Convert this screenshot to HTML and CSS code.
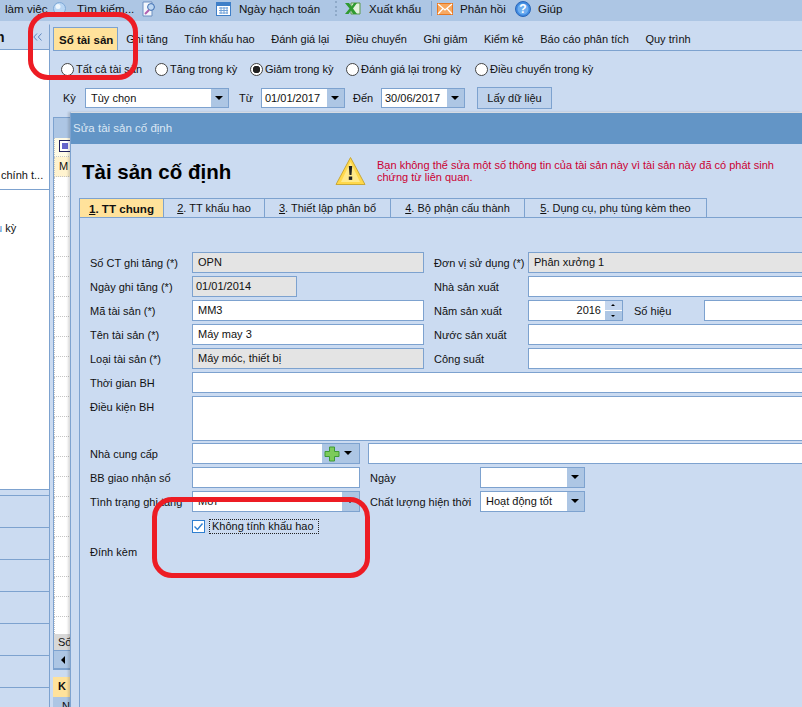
FILE: index.html
```html
<!DOCTYPE html>
<html lang="vi">
<head>
  <meta charset="UTF-8">
  <title>Sửa tài sản cố định</title>
  <link rel="stylesheet" href="styles.css">
</head>
<body>

  <div class="toolbar">
    <span class="tool tool-first">làm việc</span>
    <svg class="tool-icon ic-search" width="13" height="13" viewBox="0 0 13 13"><circle cx="6.500" cy="6.500" r="6" fill="#b9d6f4" stroke="#7fa9d6"/><circle cx="5" cy="4.500" r="2.500" fill="#eef6fd"/></svg>
    <span class="tool t-search">Tìm kiếm...</span>
    <svg class="tool-icon ic-report" width="15" height="16" viewBox="0 0 15 16"><path d="M1 1h9v14H1z" fill="#f4f7fc" stroke="#6d8fc0"/><circle cx="9" cy="6" r="3.400" fill="#bcd6f2" stroke="#3c6cb0"/><path d="M7 9l-4 4" stroke="#b060b0" stroke-width="2"/></svg>
    <span class="tool t-report">Báo cáo</span>
    <svg class="tool-icon ic-cal" width="15" height="15" viewBox="0 0 15 15"><rect x=".5" y="1.500" width="14" height="13" fill="#fff" stroke="#3f7fc8"/><rect x="1" y="2" width="13" height="3" fill="#3f7fc8"/><path d="M3 7h9M3 9.500h9M3 12h9M5 6v7M8 6v7M11 6v7" stroke="#6fa0d8" stroke-width="1"/></svg>
    <span class="tool t-cal">Ngày hạch toán</span>
    <span class="tool-dots"></span>
    <svg class="tool-icon ic-excel" width="16" height="13" viewBox="0 0 16 13"><path d="M6 1h9v11H6z" fill="#e4f2dc" stroke="#5a9a4a"/><path d="M0 1h4l2.500 3.500L9 1h3L8 6.500 12 12H8L6 8.500 3.500 12H0l4.500-5.500z" fill="#2f9a2f"/></svg>
    <span class="tool t-excel">Xuất khẩu</span>
    <span class="tool-sep"></span>
    <svg class="tool-icon ic-mail" width="16" height="12" viewBox="0 0 16 12"><rect x=".5" y=".5" width="15" height="11" fill="#f8a860" stroke="#e87820"/><path d="M1 1l7 6 7-6M1 11l5-5.500M15 11l-5-5.500" fill="none" stroke="#fff" stroke-width="1.200"/></svg>
    <span class="tool t-mail">Phản hồi</span>
    <svg class="tool-icon ic-help" width="16" height="16" viewBox="0 0 16 16"><circle cx="8" cy="8" r="7.500" fill="#3f8ae0" stroke="#2a66b8"/><circle cx="8" cy="8" r="5.500" fill="#6eaef0"/><text x="8" y="12" class="help-mark">?</text></svg>
    <span class="tool">Giúp</span>
  </div>

  <div class="workspace">

    <div class="sidebar">
      <div class="side-head">
        <span class="side-title">n</span>
        <svg class="side-collapse" width="9" height="8" viewBox="0 0 9 8"><path d="M4 .5L.8 4 4 7.500M8.500 .5L5.300 4l3.200 3.500" fill="none" stroke="#5e86bd"/></svg>
      </div>
      <div class="side-list">
        <div class="side-item side-item-top">chính t...</div>
        <div class="side-item"><span class="side-blue">u</span> kỳ</div>
      </div>
      <div class="side-groups">
        <div class="side-group side-group-thin"></div>
        <div class="side-group"></div>
        <div class="side-group"></div>
        <div class="side-group"></div>
        <div class="side-group"></div>
        <div class="side-group"></div>
        <div class="side-group"></div>
      </div>
    </div>

    <div class="main">
      <div class="tabs">
        <div class="tab tab-active">Sổ tài sản</div>
        <div class="tab">Ghi tăng</div>
        <div class="tab">Tính khấu hao</div>
        <div class="tab">Đánh giá lại</div>
        <div class="tab">Điều chuyển</div>
        <div class="tab">Ghi giảm</div>
        <div class="tab">Kiểm kê</div>
        <div class="tab">Báo cáo phân tích</div>
        <div class="tab">Quy trình</div>
      </div>

      <div class="radios">
        <div class="radio r1"><span class="dot"></span>Tất cả tài sản</div>
        <div class="radio r2"><span class="dot"></span>Tăng trong kỳ</div>
        <div class="radio r3"><span class="dot dot-on"></span>Giảm trong kỳ</div>
        <div class="radio r4"><span class="dot"></span>Đánh giá lại trong kỳ</div>
        <div class="radio"><span class="dot"></span>Điều chuyển trong kỳ</div>
      </div>

      <div class="filter">
        <span class="f-ky">Kỳ</span>
        <div class="combo f-period"><span class="combo-text">Tùy chọn</span><span class="arrow"></span></div>
        <span class="f-tu">Từ</span>
        <div class="combo f-date"><span class="combo-text date-text">01/01/2017</span><span class="arrow"></span></div>
        <span class="f-den">Đến</span>
        <div class="combo f-date"><span class="combo-text date-text">30/06/2017</span><span class="arrow"></span></div>
        <button class="load-btn">Lấy dữ liệu</button>
      </div>

      <div class="grid">
        <div class="grid-head"></div>
        <div class="grid-row grid-filter"><span class="grid-check"></span></div>
        <div class="grid-row grid-sel">M</div>
        <div class="grid-row"></div>
        <div class="grid-row"></div>
        <div class="grid-row"></div>
        <div class="grid-row"></div>
        <div class="grid-row"></div>
        <div class="grid-row"></div>
        <div class="grid-row"></div>
        <div class="grid-row"></div>
        <div class="grid-row"></div>
        <div class="grid-row"></div>
        <div class="grid-row"></div>
        <div class="grid-row"></div>
        <div class="grid-row"></div>
        <div class="grid-row"></div>
        <div class="grid-row"></div>
        <div class="grid-row"></div>
        <div class="grid-row"></div>
        <div class="grid-row"></div>
        <div class="grid-row"></div>
        <div class="grid-row"></div>
        <div class="grid-row"></div>
        <div class="grid-row"></div>
        <div class="grid-row grid-last"></div>
        <div class="grid-foot">Số</div>
        <div class="grid-scroll"><span class="arrow-left"></span></div>
      </div>

      <div class="sub-tab">K</div>
      <div class="sub-body">N</div>
    </div>
  </div>

  <div class="dialog">
    <div class="dialog-title">Sửa tài sản cố định</div>
    <div class="dialog-head">
      <h1>Tài sản cố định</h1>
      <svg class="warn" width="31" height="30" viewBox="0 0 31 30"><path d="M15.500 1.500L30 28.500H1z" fill="#ffd84a" stroke="#c8a838"/><path d="M15.500 6L25 26H6z" fill="#ffe98a"/><path d="M13.800 10h3.400l-.7 9h-2z" fill="#222"/><rect x="13.800" y="20.500" width="3.400" height="3.400" fill="#222"/></svg>
      <p class="warn-text">Bạn không thể sửa một số thông tin của tài sản này vì tài sản này đã có phát sinh chứng từ liên quan.</p>
    </div>

    <div class="dtabs">
      <div class="dtab dtab-active dt1"><u>1</u>. TT chung</div>
      <div class="dtab dt2"><u>2</u>. TT khấu hao</div>
      <div class="dtab dt3"><u>3</u>. Thiết lập phân bổ</div>
      <div class="dtab dt4"><u>4</u>. Bộ phận cấu thành</div>
      <div class="dtab dt5"><u>5</u>. Dụng cụ, phụ tùng kèm theo</div>
    </div>

    <div class="form">
      <div class="row">
        <label>Số CT ghi tăng (*)</label>
        <div class="field w-mid off">OPN</div>
        <label class="lbl-right">Đơn vị sử dụng (*)</label>
        <div class="field w-right off">Phân xưởng 1</div>
      </div>
      <div class="row">
        <label>Ngày ghi tăng (*)</label>
        <div class="field w-short off">01/01/2014</div>
        <label class="lbl-right lbl-after-short">Nhà sản xuất</label>
        <div class="field w-right"></div>
      </div>
      <div class="row">
        <label>Mã tài sản (*)</label>
        <div class="field w-mid">MM3</div>
        <label class="lbl-right">Năm sản xuất</label>
        <div class="field w-year">
          <span class="year-val">2016</span>
          <span class="spin"><span class="spin-up"></span><span class="spin-down"></span></span>
        </div>
        <label class="lbl-hieu">Số hiệu</label>
        <div class="field w-hieu"></div>
      </div>
      <div class="row">
        <label>Tên tài sản (*)</label>
        <div class="field w-mid">Máy may 3</div>
        <label class="lbl-right">Nước sản xuất</label>
        <div class="field w-right"></div>
      </div>
      <div class="row">
        <label>Loại tài sản (*)</label>
        <div class="field w-mid off">Máy móc, thiết bị</div>
        <label class="lbl-right">Công suất</label>
        <div class="field w-right"></div>
      </div>
      <div class="row">
        <label>Thời gian BH</label>
        <div class="field w-full"></div>
      </div>
      <div class="row row-tall">
        <label class="lbl-top">Điều kiện BH</label>
        <div class="field w-full field-tall"></div>
      </div>
      <div class="row">
        <label>Nhà cung cấp</label>
        <div class="combo w-supplier">
          <span class="combo-text"></span>
          <span class="plus-box">
            <svg width="16" height="16" viewBox="0 0 16 16"><path d="M5.500 1h5v4.500H15v5h-4.500V15h-5v-4.500H1v-5h4.500z" fill="#7ccb5a" stroke="#3f9a35"/></svg>
            <span class="arrow arrow-plain"></span>
          </span>
        </div>
        <div class="field w-supplier-name"></div>
      </div>
      <div class="row">
        <label>BB giao nhận số</label>
        <div class="field w-supplier"></div>
        <label class="lbl-date">Ngày</label>
        <div class="combo w-date2"><span class="combo-text"></span><span class="arrow"></span></div>
      </div>
      <div class="row">
        <label>Tình trạng ghi tăng</label>
        <div class="combo w-supplier"><span class="combo-text">Mới</span><span class="arrow"></span></div>
        <label class="lbl-date">Chất lượng hiện thời</label>
        <div class="combo w-date2"><span class="combo-text">Hoạt động tốt</span><span class="arrow"></span></div>
      </div>
      <div class="row row-check">
        <span class="check">
          <svg width="13" height="13" viewBox="0 0 13 13"><path d="M2.500 6.500l3 3 5-6" fill="none" stroke="#2f7fd0" stroke-width="1.400"/></svg>
        </span>
        <span class="check-label">Không tính khấu hao</span>
      </div>
      <div class="row row-attach">
        <label>Đính kèm</label>
      </div>
    </div>
  </div>

  <div class="mark mark-tab"></div>
  <div class="mark mark-check"></div>

</body>
</html>
```

FILE: styles.css
```css
* {
  box-sizing: border-box;
}

html, body {
  height: 100%;
}

body {
  margin: 0;
  position: relative;
  overflow: hidden;
  width: 802px;
  height: 707px;
  background: #cbdbf1;
  color: #111;
  font-family: "Liberation Sans", Arial, sans-serif;
  font-size: 11px;
}

/* toolbar */
.toolbar {
  display: flex;
  align-items: center;
  height: 21px;
  padding-bottom: 4px;
  background: #adc6e4;
  font-size: 11.600px;
  white-space: nowrap;
}

.tool-first { margin-left: 5px; width: 48px; }
.ic-search { margin-right: 11px; }
.t-search { width: 65px; }
.ic-report { margin-right: 8px; }
.t-report { width: 51px; }
.ic-cal { margin-right: 8px; }
.t-cal { width: 96px; }
.ic-excel { margin: 0 8px; }
.t-excel { width: 62px; }
.ic-mail { margin-right: 7px; }
.t-mail { width: 55px; }
.ic-help { margin-right: 7px; }

.tool-dots {
  width: 2px;
  height: 15px;
  border-left: 2px dotted #8ea9c8;
}

.tool-sep {
  width: 1px;
  height: 15px;
  background: #7da2cf;
  margin-right: 5px;
}

.help-mark {
  fill: #fff;
  font-family: "Liberation Sans", sans-serif;
  font-size: 12px;
  font-weight: bold;
  text-anchor: middle;
}

/* left side */
.workspace {
  display: flex;
  height: 686px;
  overflow: hidden;
}

.sidebar {
  width: 50px;
  flex: none;
  margin-top: 3px;
  border-right: 1px solid #7da2cf;
  border-top: 1px solid #cbdbf1;
  overflow: hidden;
}

.side-head {
  display: flex;
  justify-content: space-between;
  align-items: center;
  height: 25px;
  border-bottom: 1px solid #7da2cf;
}

.side-title {
  font-weight: bold;
  font-size: 14px;
  margin-left: -4px;
}

.side-collapse {
  margin-right: 7px;
}

.side-list {
  background: #fff;
  height: 439px;
}

.side-item {
  padding-top: 32px;
  white-space: nowrap;
}

.side-item-top {
  height: 140px;
  padding: 119px 0 0 1px;
  border-bottom: 1px solid #7da2cf;
}

.side-blue { color: #4a8fd0; margin-left: -4px; }

.side-group {
  height: 32px;
  border-bottom: 1px solid #7da2cf;
}

.side-group-thin {
  height: 7px;
  border-top: 1px solid #7da2cf;
}

/* main */
.main {
  flex: 1;
  padding-left: 3px;
  min-width: 0;
}

.tabs {
  display: flex;
  height: 30px;
  padding-top: 6px;
  border-bottom: 1px solid #7da2cf;
}

.tab {
  padding: 6px 8.250px 0;
  white-space: nowrap;
}

.tab-active {
  width: 65px;
  background: #ffe29b;
  border: 1px solid #7da2cf;
  border-bottom: none;
  padding: 6px 0 0 5px;
  font-size: 11.500px;
  font-weight: bold;
}

.radios {
  display: flex;
  align-items: center;
  height: 36px;
  padding-left: 8px;
  white-space: nowrap;
}

.radio {
  display: flex;
  align-items: center;
  gap: 2px;
}

.r1 { width: 94px; }
.r2 { width: 95px; }
.r3 { width: 96px; }
.r4 { width: 129px; }

.dot {
  width: 13px;
  height: 13px;
  border: 1px solid #444;
  border-radius: 50%;
  background: #fff;
}

.dot-on {
  background: radial-gradient(circle, #222 0 3.500px, #fff 4px);
}

.filter {
  display: flex;
  align-items: center;
  height: 22px;
  white-space: nowrap;
}

.f-ky { margin-left: 10px; width: 22px; }
.f-tu { margin-left: 10px; width: 22px; }
.f-den { margin-left: 8px; width: 28px; }

.combo {
  display: flex;
  height: 21px;
  background: #fff;
  border: 1px solid #7da2cf;
  flex: none;
}

.f-period { width: 144px; height: 20px; }
.f-date { width: 84px; height: 20px; }

.combo-text {
  flex: 1;
  padding: 1px 0 0 5px;
  line-height: 16px;
  min-width: 0;
}

.date-text { padding-left: 3px; }

.arrow {
  position: relative;
  width: 17px;
  background: #adc6e4;
  flex: none;
}

.arrow::after {
  content: "";
  position: absolute;
  left: 4px;
  top: 7px;
  border: 4px solid transparent;
  border-top: 4px solid #000;
  border-bottom: none;
}

.load-btn {
  margin-left: 12px;
  width: 75px;
  height: 22px;
  background: #bed2ec;
  border: 1px solid #7da2cf;
  color: #111;
  font: inherit;
  padding: 0;
}

.grid {
  width: 40px;
  margin-top: 8px;
  border: 1px solid #7da2cf;
  border-right: none;
}

.grid-head {
  height: 20px;
  background: #adc6e4;
}

.grid-row {
  height: 20px;
  background: #fff;
  border-bottom: 1px dotted #c4c4c4;
  border-left: 1px dotted #c4c4c4;
}

.grid-filter {
  height: 19px;
  background: #fffbe6;
  padding: 2px 0 0 4px;
}

.grid-check {
  display: block;
  width: 12px;
  height: 12px;
  border: 1px solid #222260;
  background: #6666cc;
  box-shadow: inset 0 0 0 2px #fff;
}

.grid-sel {
  background: #fff3cf;
  padding: 3px 0 0 4px;
}

.grid-last {
  height: 17px;
  border-bottom: none;
}

.grid-foot {
  height: 17px;
  background: #d8d8d8;
  padding: 2px 0 0 4px;
  border-bottom: 1px solid #7da2cf;
}

.grid-scroll {
  height: 18px;
  background: #adc6e4;
  border-bottom: 1px solid #7da2cf;
  padding: 5px 0 0 7px;
}

.arrow-left {
  display: block;
  width: 0;
  border: 4px solid transparent;
  border-right: 4px solid #000;
  border-left: none;
}

.sub-tab {
  width: 18px;
  height: 20px;
  margin-top: 7px;
  padding: 3px 0 0 5px;
  background: #ffe29b;
  font-weight: bold;
}

.sub-body {
  width: 18px;
  height: 12px;
  padding: 3px 0 0 9px;
  background: #adc6e4;
  overflow: hidden;
}

/* dialog, floats over the main window */
.dialog {
  position: absolute;
  left: 70px;
  top: 112px;
  right: 0;
  bottom: 0;
  display: flex;
  flex-direction: column;
  background: #cbdbf1;
  border-left: 1px solid #7da2cf;
  border-top: 1px solid #d6dbe2;
  box-shadow: -2px 0 2px rgba(0, 0, 0, 0.14);
}

.dialog-title {
  height: 31px;
  padding: 9px 0 0 2px;
  background: #6395c6;
  color: #dbe7f4;
  font-size: 11.500px;
}

.dialog-head {
  display: flex;
  align-items: center;
  height: 54px;
  padding-left: 11px;
}

.dialog-head h1 {
  width: 253px;
  margin: 1px 0 0;
  color: #000;
  font-size: 20.500px;
  font-weight: bold;
}

.warn {
  flex: none;
  margin-top: -1px;
}

.warn-text {
  width: 402px;
  margin: -1px 0 0 11px;
  color: #cc0033;
  font-size: 11px;
  line-height: 12px;
}

.dtabs {
  display: flex;
  height: 20px;
  margin-left: 8px;
}

.dtab {
  height: 20px;
  border: 1px solid #7da2cf;
  border-left: none;
  text-align: center;
  padding-top: 3px;
  white-space: nowrap;
}

.dtab-active {
  background: #ffe29b;
  border-left: 1px solid #7da2cf;
  border-bottom: none;
  font-size: 11.600px;
  font-weight: bold;
}

.dt1 { width: 85px; }
.dt2 { width: 101px; }
.dt3 { width: 126px; }
.dt4 { width: 134px; }
.dt5 { width: 182px; }

.form {
  flex: 1;
  margin-left: 8px;
  margin-top: -1px;
  padding: 34px 0 0 10px;
  border-left: 1px solid #7da2cf;
  border-top: 1px solid #7da2cf;
}

.row {
  display: flex;
  align-items: center;
  height: 21px;
  margin-bottom: 3px;
  white-space: nowrap;
}

.row label {
  width: 102px;
  flex: none;
}

.field {
  flex: none;
  height: 21px;
  line-height: 16px;
  padding: 1px 0 0 5px;
  background: #fff;
  border: 1px solid #7da2cf;
}

.off { background: #e4e4e4; }

.w-mid { width: 232px; }
.w-short { width: 105px; padding-left: 3px; }
.w-right { width: 274px; border-right: none; }
.w-full { width: 610px; border-right: none; }
.w-supplier { width: 168px; }
.w-supplier-name { width: 434px; margin-left: 8px; border-right: none; }
.w-date2 { width: 105px; }
.w-year { width: 95px; position: relative; padding: 0; }
.w-hieu { width: 98px; border-right: none; }

.row .lbl-right { width: 94px; margin-left: 10px; }
.row .lbl-after-short { margin-left: 137px; }
.row .lbl-hieu { width: 70px; margin-left: 11px; }
.row .lbl-date { width: 110px; margin-left: 10px; }
.row .lbl-top { align-self: flex-start; padding-top: 5px; }

.row-tall { height: 45px; margin-bottom: 2px; }
.field-tall { height: 45px; }

.year-val {
  display: block;
  padding: 1px 21px 0 0;
  line-height: 16px;
  text-align: right;
}

.spin {
  position: absolute;
  top: 0;
  right: 0;
  width: 17px;
  height: 19px;
  background: linear-gradient(#c4d6ee 0 9px, #fff 9px 10px, #adc6e4 10px);
}

.spin-up, .spin-down {
  position: absolute;
  left: 6px;
  border: 2px solid transparent;
}

.spin-up { top: 3px; border-bottom: 2px solid #000; border-top: none; }
.spin-down { bottom: 3px; border-top: 2px solid #000; border-bottom: none; }

.plus-box {
  display: flex;
  align-items: center;
  width: 37px;
  flex: none;
  background: #adc6e4;
  padding-left: 2px;
}

.arrow-plain {
  align-self: stretch;
  width: 19px;
}

.row-check {
  height: 15px;
  margin: 7px 0 0 102px;
}

.check {
  display: block;
  width: 13px;
  height: 13px;
  background: #fff;
  border: 1px solid #2f7fd0;
  margin-right: 4px;
}

.check svg {
  display: block;
  margin: -1px;
}

.check-label {
  border: 1px dotted #222;
  padding: 0 4px 0 2px;
  line-height: 13px;
}

.row-attach {
  margin-top: 7px;
}

/* red hand drawn annotations */
.mark {
  position: absolute;
  border: 5px solid #ed1c24;
  border-radius: 20px;
}

.mark-tab {
  left: 28px;
  top: 12px;
  width: 110px;
  height: 68px;
}

.mark-check {
  left: 152px;
  top: 497px;
  width: 218px;
  height: 81px;
}
```
